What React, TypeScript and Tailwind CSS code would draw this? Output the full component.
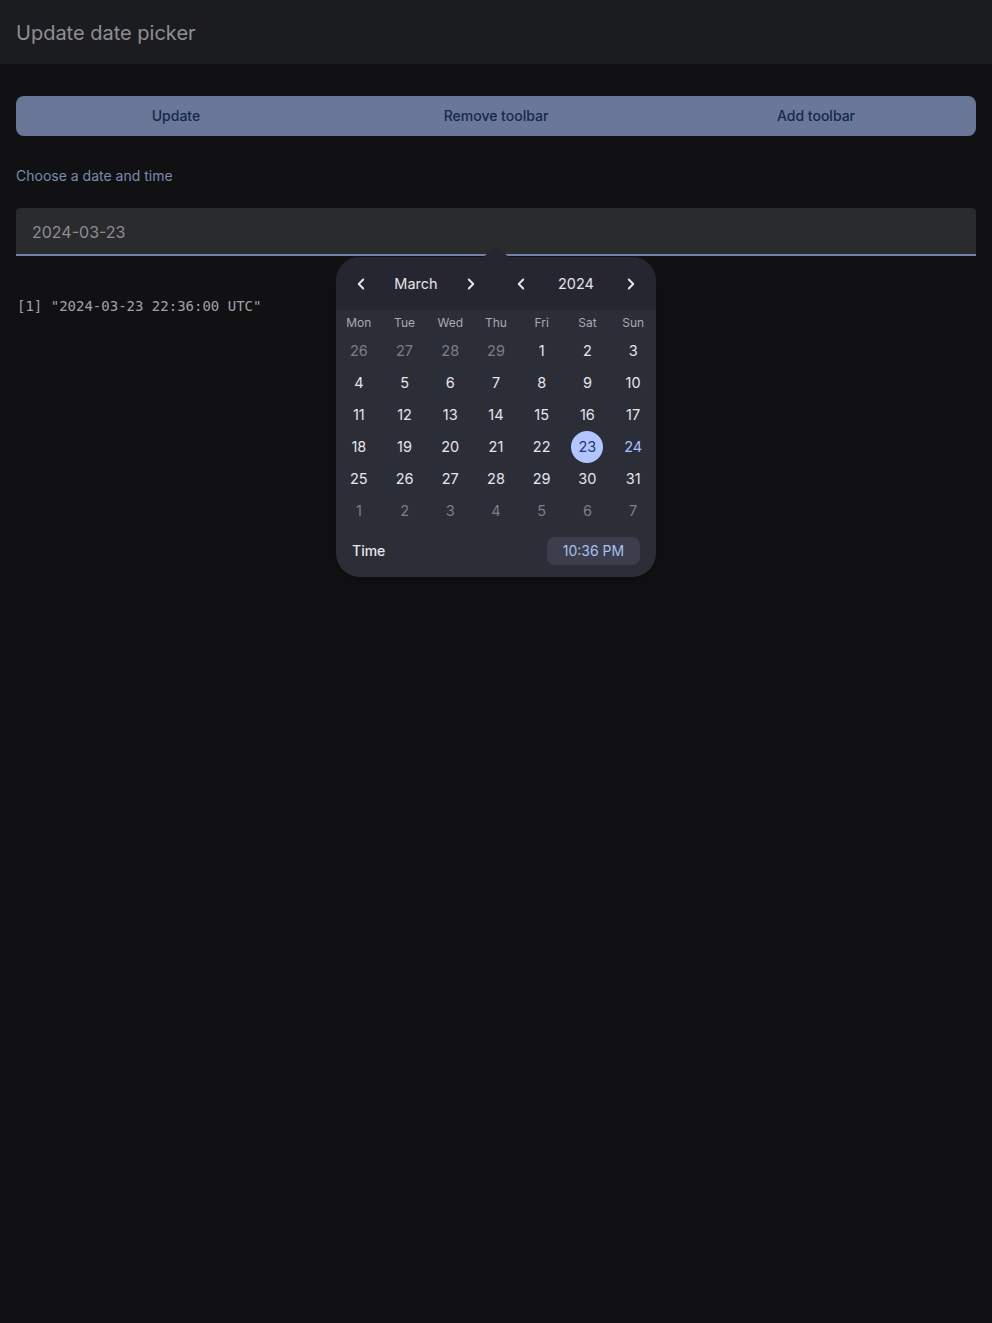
import { ChevronLeft, ChevronRight } from "lucide-react";

type Day = { n: number; muted?: boolean };

const weekdays = ["Mon", "Tue", "Wed", "Thu", "Fri", "Sat", "Sun"];

const days: Day[] = [
  { n: 26, muted: true },
  { n: 27, muted: true },
  { n: 28, muted: true },
  { n: 29, muted: true },
  ...Array.from({ length: 31 }, (_, i) => ({ n: i + 1 })),
  ...Array.from({ length: 7 }, (_, i) => ({ n: i + 1, muted: true })),
];

function Stepper({ label }: { label: string }) {
  return (
    <div className="flex flex-1 items-center justify-between px-4 pt-px">
      <ChevronLeft size={18} strokeWidth={2.5} className="text-[#e8e8ee]" />
      <span className="text-[14.5px] text-[#e4e4ea]">{label}</span>
      <ChevronRight size={18} strokeWidth={2.5} className="text-[#e8e8ee]" />
    </div>
  );
}

function Calendar() {
  return (
    <div className="absolute left-1/2 top-full z-10 mt-px w-[320px] -translate-x-1/2">
      {/* pointer */}
      <div className="absolute -top-[10px] left-1/2 h-0 w-0 -translate-x-1/2 border-x-[13px] border-b-[10px] border-x-transparent border-b-[#25262f]" />
      <div className="overflow-hidden rounded-[24px] bg-[#2b2d37] shadow-lg">
        <div className="flex h-[53px] items-center bg-[#25262f]">
          <Stepper label="March" />
          <Stepper label="2024" />
        </div>
        <div className="grid grid-cols-7 pt-px">
          {weekdays.map((w) => (
            <div
              key={w}
              className="flex h-6 items-center justify-center text-xs text-[#a9aab2]"
            >
              {w}
            </div>
          ))}
          {days.map((d, i) => {
            const selected = !d.muted && d.n === 23;
            const today = !d.muted && d.n === 24;
            return (
              <div key={i} className="flex h-8 items-center justify-center">
                <span
                  className={
                    selected
                      ? "flex h-8 w-8 items-center justify-center rounded-full bg-[#b3c5ff] text-[14.5px] text-[#1c3a70]"
                      : today
                        ? "text-[14.5px] text-[#a8c0ff]"
                        : d.muted
                          ? "text-[14.5px] text-[#7d7f88]"
                          : "text-[14.5px] text-[#e6e6ec]"
                  }
                >
                  {d.n}
                </span>
              </div>
            );
          })}
        </div>
        <div className="flex items-center justify-between px-4 pb-3 pt-[10px]">
          <span className="text-sm font-medium text-[#e6e6ec]">Time</span>
          <span className="flex h-7 w-[93px] items-center justify-center rounded-lg bg-[#3c3f4b] text-sm text-[#a9bff2]">
            10:36 PM
          </span>
        </div>
      </div>
    </div>
  );
}

export default function App() {
  return (
    <div className="min-h-screen bg-[#111113] font-['Inter','Noto_Sans',sans-serif]">
      <header className="flex h-16 items-center bg-[#1b1c20] px-4 pt-0.5">
        <h1 className="text-[20px] text-[#8f8f93]">Update date picker</h1>
      </header>

      <main className="px-4 pt-8">
        <div className="grid h-10 grid-cols-3 rounded-lg bg-[#6a7799] text-sm font-medium text-[#13294b]">
          <button className="flex items-center justify-center">Update</button>
          <button className="flex items-center justify-center">
            Remove toolbar
          </button>
          <button className="flex items-center justify-center">
            Add toolbar
          </button>
        </div>

        <p className="mt-[30px] text-sm leading-5 text-[#7b8bb0]">
          Choose a date and time
        </p>

        <div className="relative mt-[22px]">
          <div className="flex h-12 items-center rounded-t-[4px] border-b-2 border-[#7282aa] bg-[#2a2b2f] px-4 pt-0.5 text-base text-[#8e8e92]">
            2024-03-23
          </div>
          <Calendar />
        </div>

        <pre className="mt-[40px] pl-px font-['DejaVu_Sans_Mono',monospace] text-[14px] leading-5 text-[#a2a2a6]">
          [1] "2024-03-23 22:36:00 UTC"
        </pre>
      </main>
    </div>
  );
}
